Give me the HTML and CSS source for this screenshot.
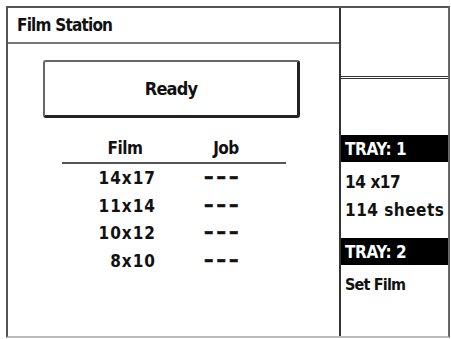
FILE: index.html
```html
<!DOCTYPE html>
<html>
<head>
<meta charset="utf-8">
<link rel="stylesheet" href="styles.css">
</head>
<body>
<div class="screen">
  <div class="main">
    <div class="title">Film Station</div>
    <div class="content">
      <div class="ready">Ready</div>
      <div class="table">
        <div class="thead">
          <div class="th-film">Film</div>
          <div class="th-job">Job</div>
        </div>
        <div class="row"><div class="size">14x17</div><div class="dash">–––</div></div>
        <div class="row"><div class="size">11x14</div><div class="dash">–––</div></div>
        <div class="row"><div class="size">10x12</div><div class="dash">–––</div></div>
        <div class="row"><div class="size">8x10</div><div class="dash">–––</div></div>
      </div>
    </div>
  </div>
  <div class="side">
    <div class="side-top"></div>
    <div class="side-gap"></div>
    <div class="tray">TRAY: 1</div>
    <div class="tray-info">
      <div class="line1">14 x17</div>
      <div class="line2">114 sheets</div>
    </div>
    <div class="tray">TRAY: 2</div>
    <div class="setfilm">Set Film</div>
  </div>
</div>
</body>
</html>
```
FILE: styles.css
```css
html, body {
  margin: 0;
  padding: 0;
  background: #fff;
}
body {
  font-family: "DejaVu Sans Condensed", "Liberation Sans", Arial, sans-serif;
  font-weight: bold;
  color: #111;
}
.screen {
  margin: 6px 0 0 6px;
  width: 440px;
  height: 328px;
  border: 2px solid #555;
  border-right-color: #666;
  border-bottom-color: #bbb;
  display: flex;
}
.main {
  width: 331px;
  display: flex;
  flex-direction: column;
}
.title {
  height: 34px;
  line-height: 34px;
  border-bottom: 2px solid #777;
  padding-left: 9px;
  font-size: 17px;
  letter-spacing: -0.8px;
}
.content {
  padding-top: 16px;
}
.ready {
  margin-left: 35px;
  width: 252px;
  height: 53px;
  border: 2px solid #666;
  border-right: 3px solid #222;
  border-bottom: 3px solid #222;
  border-radius: 3px;
  text-align: center;
  line-height: 54px;
  font-size: 18px;
  letter-spacing: -0.8px;
}
.table {
  margin-left: 54px;
  width: 224px;
  margin-top: 16px;
}
.thead {
  display: flex;
  height: 28px;
  line-height: 28px;
  border-bottom: 2px solid #555;
  font-size: 17px;
  letter-spacing: -0.5px;
}
.th-film {
  width: 126px;
  text-align: center;
}
.th-job {
  width: 76px;
  text-align: center;
}
.row {
  display: flex;
  height: 27.6px;
  line-height: 28px;
  font-size: 17px;
}
.size {
  width: 94px;
  text-align: right;
  letter-spacing: 1px;
  margin-right: -1px;
}
.dash {
  margin-left: 49px;
  letter-spacing: 3px;
  font-size: 21px;
  line-height: 26px;
  -webkit-text-stroke: 0.6px #111;
}
.side {
  flex: 1;
  border-left: 2px solid #333;
  display: flex;
  flex-direction: column;
}
.side-top {
  height: 68px;
  border-bottom: 3px double #333;
}
.side-gap {
  height: 56px;
}
.tray {
  height: 27px;
  line-height: 28px;
  background: #000;
  color: #fff;
  padding-left: 4px;
  font-size: 17px;
  letter-spacing: -0.4px;
}
.tray-info {
  height: 76px;
  padding-left: 4px;
  font-size: 17px;
}
.line1 {
  margin-top: 6px;
  height: 28px;
  line-height: 28px;
  letter-spacing: -0.4px;
}
.line2 {
  height: 28px;
  line-height: 28px;
  letter-spacing: 0.5px;
}
.setfilm {
  padding-left: 4px;
  margin-top: 8px;
  line-height: 24px;
  font-size: 16px;
  letter-spacing: -0.8px;
}
```
